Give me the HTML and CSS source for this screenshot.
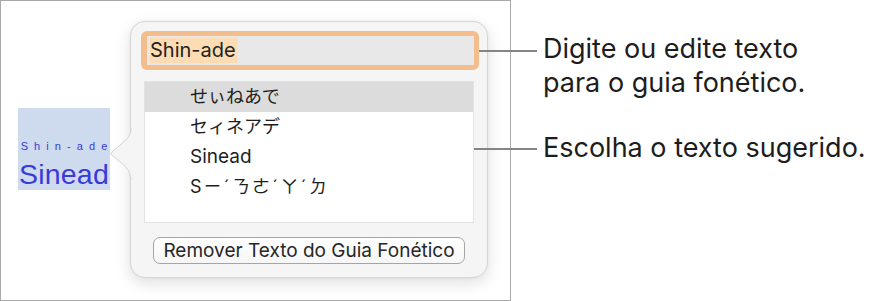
FILE: index.html
```html
<!DOCTYPE html>
<html lang="pt">
<head>
<meta charset="utf-8">
<title>Guia fonético</title>
<link rel="stylesheet" href="styles.css">
</head>
<body>
<div class="stage">
  <div class="frame">
    <div class="ruby-box">
      <span class="ruby-top">Shin-ade</span>
      <span class="ruby-base">Sinead</span>
    </div>
    <div class="popover">
      <svg class="arrow" width="23" height="52" viewBox="0 0 23 52">
        <path d="M21 0 C21 9 17 11 2 24 C0.5 25.5 0.5 26.5 2 27.5 C14 37 20 40 21 52 L23 52 L23 0 Z" fill="#f5f5f5"/>
        <path d="M21 0 C21 9 17 11 2 24 C0.5 25.5 0.5 26.5 2 27.5 C14 37 20 40 21 52" fill="none" stroke="#d4d4d4" stroke-width="1"/>
      </svg>
      <div class="ring">
        <div class="field"><span class="sel">Shin-ade</span></div>
      </div>
      <div class="list">
        <div class="row row-on cjk">せぃねあで</div>
        <div class="row cjk">セィネアデ</div>
        <div class="row">Sinead</div>
        <div class="row cjk bopo">Sㄧˊㄋㄜˊㄚˊㄉ</div>
      </div>
      <div class="btn-wrap">
        <div class="btn">Remover Texto do Guia Fonético</div>
      </div>
    </div>
  </div>
  <div class="notes">
    <p class="note note-one">Digite ou edite texto<br>para o guia fonético.</p>
    <p class="note note-two">Escolha o texto sugerido.</p>
  </div>
  <div class="lead lead-one"></div>
  <div class="lead lead-two"></div>
</div>
</body>
</html>
```

FILE: styles.css
```css
html, body {
  margin: 0;
  padding: 0;
  background: #ffffff;
}

.stage {
  position: relative;
  display: flex;
  width: 878px;
  height: 301px;
  font-family: Inter, "Noto Sans", sans-serif;
  color: #1f1f1f;
}

.frame {
  box-sizing: border-box;
  width: 511px;
  height: 301px;
  border: 1px solid #a8a8a8;
  display: flex;
  align-items: flex-start;
  padding-left: 17px;
  flex-shrink: 0;
}

.ruby-box {
  margin-top: 107px;
  width: 92px;
  height: 82px;
  background: #cedaed;
  display: flex;
  flex-direction: column;
  align-items: center;
  font-family: "Liberation Sans", Arial, sans-serif;
  color: #3a3ad8;
}

.ruby-top {
  margin-top: 32px;
  font-size: 11px;
  line-height: 12px;
  letter-spacing: 6.1px;
  margin-right: -6.1px;
}

.ruby-base {
  margin-top: 7px;
  font-size: 28.5px;
  line-height: 30px;
  letter-spacing: 0.2px;
}

.popover {
  position: relative;
  box-sizing: border-box;
  margin-left: 20px;
  margin-top: 20px;
  width: 358px;
  height: 257px;
  background: #f5f5f5;
  border: 1px solid #d6d6d6;
  border-radius: 15px;
  box-shadow: 0 5px 16px rgba(0, 0, 0, 0.13), 0 0 3px rgba(0, 0, 0, 0.05);
  padding-top: 9px;
  display: flex;
  flex-direction: column;
}

.arrow {
  position: absolute;
  left: -21px;
  top: 106px;
}

.ring {
  margin: 0 8px 0 10px;
  height: 39px;
  box-sizing: border-box;
  padding: 5px 5px 5px 6px;
  background: #f4bd8c;
  border-radius: 6px;
}

.field {
  height: 29px;
  background: #e8e8e8;
  display: flex;
  align-items: center;
  padding-left: 3px;
}

.sel {
  background: #fddcb3;
  font-size: 20px;
  line-height: 25px;
  color: #222222;
  padding-right: 1px;
}

.list {
  margin: 11px 13px 0 13px;
  height: 142px;
  box-sizing: border-box;
  background: #ffffff;
  border: 1px solid #e2e2e2;
}

.row {
  height: 30px;
  line-height: 30px;
  padding-left: 45px;
  font-size: 19px;
  color: #1e1e1e;
}

.cjk {
  font-family: Inter, "Noto Sans CJK JP", sans-serif;
  font-size: 18px;
}

.bopo {
  font-family: Inter, "Noto Sans CJK TC", "Noto Sans CJK JP", sans-serif;
  letter-spacing: 2px;
}

.row-on {
  background: #dcdcdc;
}

.btn-wrap {
  margin-top: 14px;
  display: flex;
  justify-content: center;
}

.btn {
  box-sizing: border-box;
  width: 312px;
  height: 27px;
  border: 1px solid #a5a5a5;
  border-radius: 7px;
  background: linear-gradient(#ffffff, #f6f6f6);
  font-size: 19px;
  line-height: 25px;
  text-align: center;
  color: #262626;
}

.notes {
  padding-left: 32px;
  padding-top: 32px;
}

.note {
  margin: 0;
  font-size: 27px;
  line-height: 34px;
  color: #1d1d1d;
  white-space: nowrap;
}

.note-two {
  margin-top: 31px;
}

.lead {
  position: absolute;
  height: 2px;
  background: #858585;
}

.lead-one {
  left: 479px;
  top: 50px;
  width: 58px;
}

.lead-two {
  left: 474px;
  top: 148px;
  width: 63px;
}
```
